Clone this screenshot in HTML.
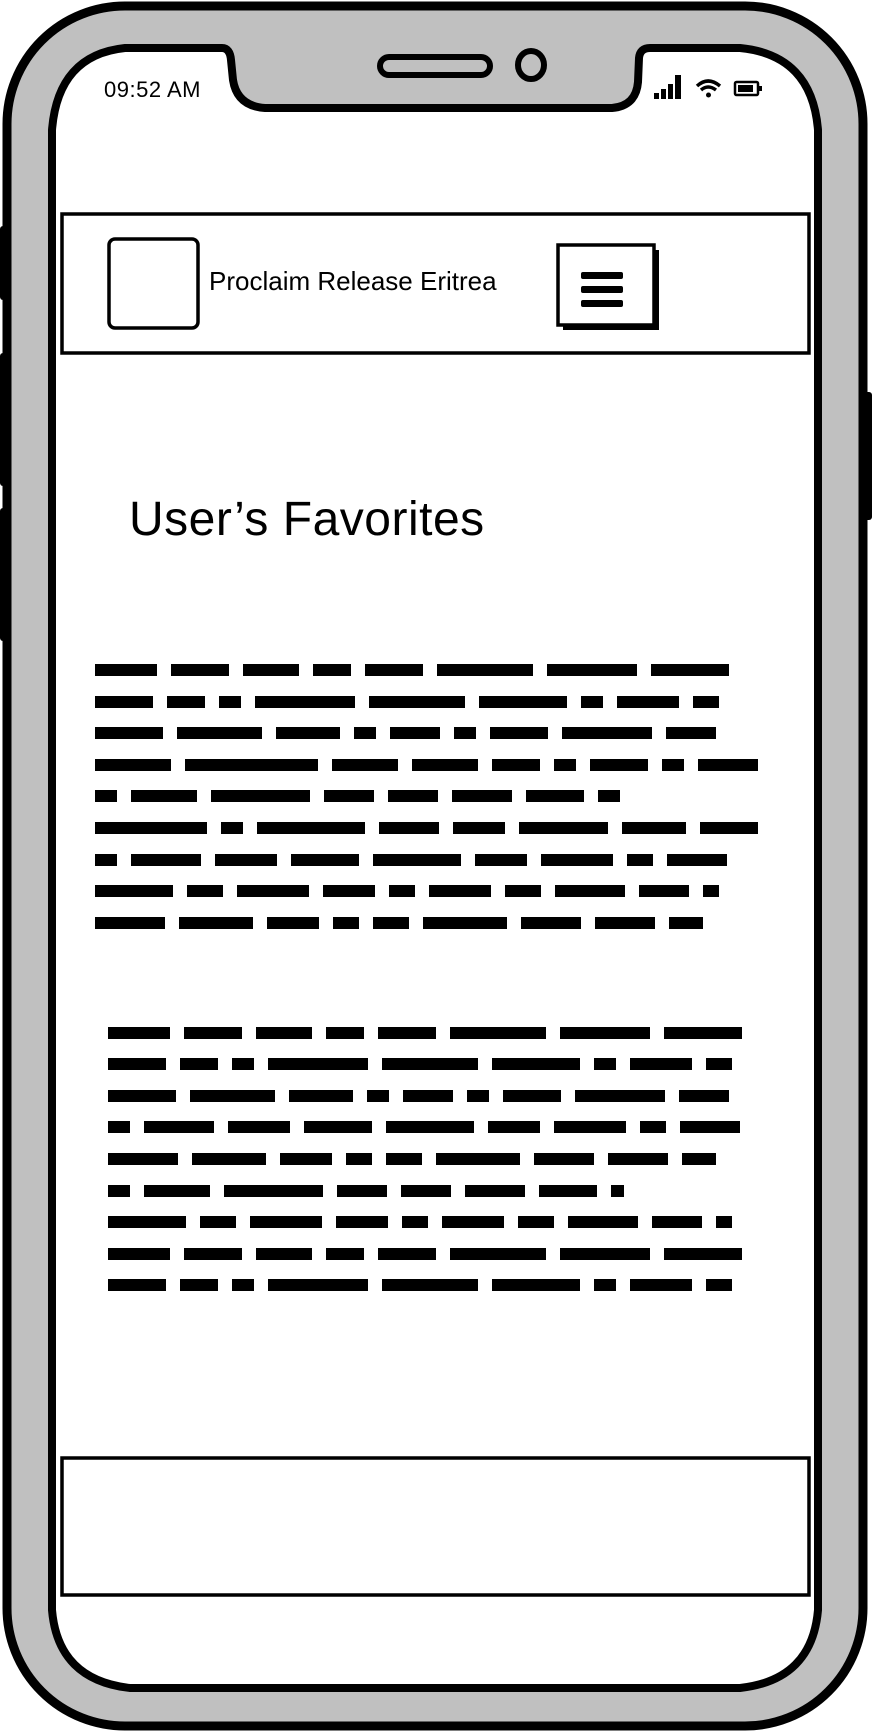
<!DOCTYPE html>
<html><head><meta charset="utf-8"><style>
html,body{margin:0;padding:0;background:#fff;}
body{width:872px;height:1734px;position:relative;overflow:hidden;font-family:"Liberation Sans",sans-serif;}
.abs{position:absolute;white-space:nowrap;}
</style></head><body>
<svg class="abs" style="left:0;top:0" width="872" height="1734" viewBox="0 0 872 1734">
  <rect x="0" y="226" width="10" height="74" rx="3" fill="#000"/>
  <rect x="0" y="353" width="10" height="133" rx="3" fill="#000"/>
  <rect x="0" y="508" width="10" height="133" rx="3" fill="#000"/>
  <rect x="862" y="392" width="10" height="128" rx="3" fill="#000"/>
  <rect x="7" y="6" width="856" height="1720" rx="118" fill="#c0c0c0" stroke="#000" stroke-width="9"/>
  <path d="M125 48 L222 48 Q230 48 231 60 L233 80 Q237 106 265 108 L612 108 Q636 106 638 82 L639 58 Q640 48 650 48 L740 48 Q812 55 818 130 L818 1610 Q812 1680 740 1688 L130 1688 Q58 1680 52 1610 L52 130 Q58 55 125 48 Z" fill="#fff" stroke="#000" stroke-width="8"/>
  <rect x="380" y="57" width="110" height="18" rx="9" fill="none" stroke="#000" stroke-width="6"/>
  <ellipse cx="531" cy="65" rx="13" ry="14" fill="none" stroke="#000" stroke-width="6"/>
  <rect x="654" y="93" width="5" height="6" fill="#000"/>
  <rect x="661" y="89" width="5" height="10" fill="#000"/>
  <rect x="668" y="84" width="5" height="15" fill="#000"/>
  <rect x="675" y="75" width="6" height="24" fill="#000"/>
  <path d="M697 86 Q708 76 720 86" fill="none" stroke="#000" stroke-width="3.5"/>
  <path d="M701 90 Q708 84 716 90" fill="none" stroke="#000" stroke-width="3.5"/>
  <circle cx="708.5" cy="95" r="2.5" fill="#000"/>
  <rect x="735" y="82" width="23" height="13" rx="1.5" fill="none" stroke="#000" stroke-width="2.5"/>
  <rect x="738" y="85" width="15" height="7" fill="#000"/>
  <rect x="759" y="86" width="3" height="5" fill="#000"/>
  <rect x="62" y="214" width="747" height="139" fill="#fff" stroke="#000" stroke-width="3.5"/>
  <rect x="109" y="239" width="89" height="89" rx="6" fill="none" stroke="#000" stroke-width="3.5"/>
  <rect x="563" y="250" width="96" height="80" fill="#000"/>
  <rect x="558" y="245" width="96" height="80" fill="#fff" stroke="#000" stroke-width="3.5"/>
  <rect x="581" y="272" width="42" height="7" rx="2" fill="#000"/>
  <rect x="581" y="286" width="42" height="7" rx="2" fill="#000"/>
  <rect x="581" y="300" width="42" height="7" rx="2" fill="#000"/>
  <rect x="62" y="1458" width="747" height="137" fill="#fff" stroke="#000" stroke-width="3.5"/>
  <g stroke="#000" stroke-width="12" stroke-linecap="butt" fill="none">
    <line x1="95" y1="670" x2="729" y2="670" stroke-dasharray="62 14 58 14 56 14 38 14 58 14 96 14 90 14 78 14"/>
    <line x1="95" y1="702" x2="719" y2="702" stroke-dasharray="58 14 38 14 22 14 100 14 96 14 88 14 22 14 62 14 26 14"/>
    <line x1="95" y1="733" x2="716" y2="733" stroke-dasharray="68 14 85 14 64 14 22 14 50 14 22 14 58 14 90 14 50 14"/>
    <line x1="95" y1="765" x2="758" y2="765" stroke-dasharray="76 14 133 14 66 14 66 14 48 14 22 14 58 14 22 14 60 14"/>
    <line x1="95" y1="796" x2="620" y2="796" stroke-dasharray="22 14 66 14 99 14 50 14 50 14 60 14 58 14 22 14"/>
    <line x1="95" y1="828" x2="758" y2="828" stroke-dasharray="112 14 22 14 108 14 60 14 52 14 89 14 64 14 58 14"/>
    <line x1="95" y1="860" x2="727" y2="860" stroke-dasharray="22 14 70 14 62 14 68 14 88 14 52 14 72 14 26 14 60 14"/>
    <line x1="95" y1="891" x2="719" y2="891" stroke-dasharray="78 14 36 14 72 14 52 14 26 14 62 14 36 14 70 14 50 14 16 14"/>
    <line x1="95" y1="923" x2="703" y2="923" stroke-dasharray="70 14 74 14 52 14 26 14 36 14 84 14 60 14 60 14 34 14"/>
    <line x1="108" y1="1033" x2="742" y2="1033" stroke-dasharray="62 14 58 14 56 14 38 14 58 14 96 14 90 14 78 14"/>
    <line x1="108" y1="1064" x2="732" y2="1064" stroke-dasharray="58 14 38 14 22 14 100 14 96 14 88 14 22 14 62 14 26 14"/>
    <line x1="108" y1="1096" x2="729" y2="1096" stroke-dasharray="68 14 85 14 64 14 22 14 50 14 22 14 58 14 90 14 50 14"/>
    <line x1="108" y1="1127" x2="740" y2="1127" stroke-dasharray="22 14 70 14 62 14 68 14 88 14 52 14 72 14 26 14 60 14"/>
    <line x1="108" y1="1159" x2="716" y2="1159" stroke-dasharray="70 14 74 14 52 14 26 14 36 14 84 14 60 14 60 14 34 14"/>
    <line x1="108" y1="1191" x2="624" y2="1191" stroke-dasharray="22 14 66 14 99 14 50 14 50 14 60 14 58 14 22 14"/>
    <line x1="108" y1="1222" x2="732" y2="1222" stroke-dasharray="78 14 36 14 72 14 52 14 26 14 62 14 36 14 70 14 50 14 16 14"/>
    <line x1="108" y1="1254" x2="742" y2="1254" stroke-dasharray="62 14 58 14 56 14 38 14 58 14 96 14 90 14 78 14"/>
    <line x1="108" y1="1285" x2="732" y2="1285" stroke-dasharray="58 14 38 14 22 14 100 14 96 14 88 14 22 14 62 14 26 14"/>
  </g>
</svg>
<div class="abs" style="left:104px;top:77px;font-size:22px;letter-spacing:0.5px;color:#000;">09:52 AM</div>
<div class="abs" style="left:209px;top:266px;font-size:26px;color:#000;">Proclaim Release Eritrea</div>
<div class="abs" style="left:129px;top:492px;font-size:48px;letter-spacing:0.5px;color:#000;">User’s Favorites</div>
</body></html>
